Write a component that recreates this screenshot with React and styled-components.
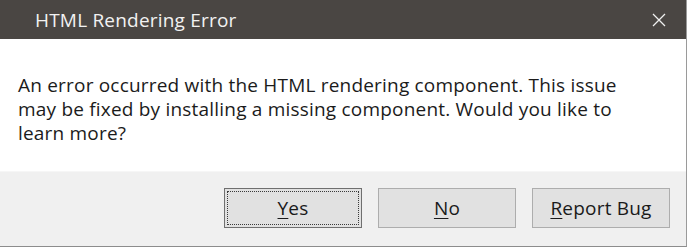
import styled, { createGlobalStyle } from "styled-components";

const GlobalStyle = createGlobalStyle`
  html, body {
    margin: 0;
    padding: 0;
    background: #ffffff;
  }
  body {
    font-family: "Open Sans", "Noto Sans", sans-serif;
  }
`;

const SWindow = styled.div`
  width: 686px;
  height: 246px;
  display: flex;
  flex-direction: column;
  border-right: 1px solid #9a9a9a;
  border-bottom: 1px solid #8c8c8c;
  background: #ffffff;
`;

const STitleBar = styled.div`
  height: 39px;
  flex-shrink: 0;
  display: flex;
  align-items: center;
  justify-content: space-between;
  padding: 0 17px 0 35px;
  background: #4a4643;
  color: #f2f2f2;
  font-size: 19px;
  letter-spacing: 0.2px;
  box-sizing: border-box;
`;

const STitle = styled.span`
  line-height: 1;
  margin-top: 1px;
`;

const SCloseBtn = styled.div`
  width: 20px;
  height: 20px;
  display: flex;
  align-items: center;
  justify-content: center;
`;

const SBody = styled.div`
  flex: 1;
  padding: 34px 0 0 18px;
`;

const SMessage = styled.p`
  margin: 0;
  width: 640px;
  font-size: 19px;
  letter-spacing: 0.2px;
  line-height: 24px;
  color: #1b1b1b;
`;

const SFooter = styled.div`
  height: 75px;
  flex-shrink: 0;
  display: flex;
  justify-content: flex-end;
  align-items: flex-start;
  gap: 16px;
  padding: 16px 16px 0 0;
  box-sizing: border-box;
  background: #f0f0f0;
  border-top: 1px solid #f6f6f6;
`;

const SButton = styled.button`
  position: relative;
  width: 138px;
  height: 40px;
  padding: 0 0 1px;
  background: #e1e1e1;
  border: 1px solid ${(p) => (p.$focused ? "#6f6f6f" : "#adadad")};
  font-family: inherit;
  font-size: 19px;
  letter-spacing: 0.2px;
  color: #1a1a1a;
  box-sizing: border-box;

  &::after {
    content: "";
    display: ${(p) => (p.$focused ? "block" : "none")};
    position: absolute;
    inset: 2px;
    border: 1px dotted #3a3a3a;
  }
`;

const SKey = styled.span`
  text-decoration: underline;
  text-underline-offset: 3px;
`;

const CloseIcon = () => (
  <svg width="14" height="14" viewBox="0 0 14 14">
    <path d="M1 1 L13 13 M13 1 L1 13" stroke="#f0f0f0" strokeWidth="1.3" fill="none" />
  </svg>
);

const App = () => {
  return (
    <>
      <GlobalStyle />
      <SWindow>
        <STitleBar>
          <STitle>HTML Rendering Error</STitle>
          <SCloseBtn>
            <CloseIcon />
          </SCloseBtn>
        </STitleBar>
        <SBody>
          <SMessage>
            An error occurred with the HTML rendering component. This issue may be fixed by
            installing a missing component. Would you like to learn more?
          </SMessage>
        </SBody>
        <SFooter>
          <SButton $focused>
            <SKey>Y</SKey>es
          </SButton>
          <SButton>
            <SKey>N</SKey>o
          </SButton>
          <SButton>
            <SKey>R</SKey>eport Bug
          </SButton>
        </SFooter>
      </SWindow>
    </>
  );
};

export default App;
